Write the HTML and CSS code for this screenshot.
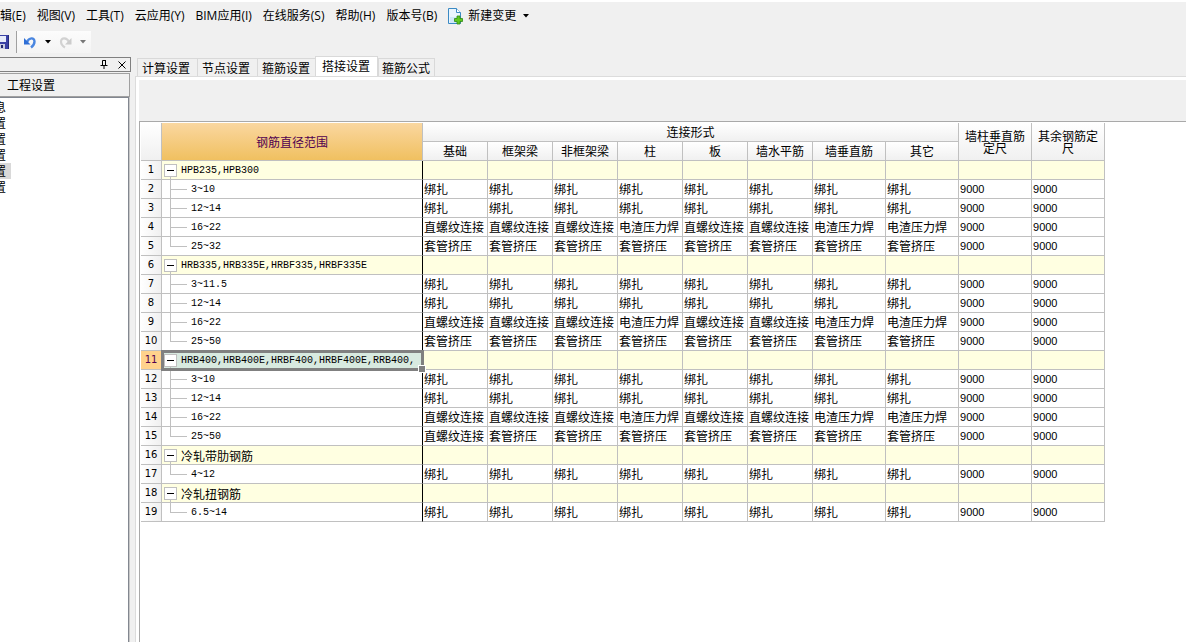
FILE: index.html
```html
<!DOCTYPE html>
<html lang="zh-CN">
<head>
<meta charset="utf-8">
<title>工程设置</title>
<link rel="stylesheet" href="styles.css">
</head>
<body>
<div class="app">
  <nav class="menubar">
    <button class="menu">辑(E)</button>
    <button class="menu">视图(V)</button>
    <button class="menu">工具(T)</button>
    <button class="menu">云应用(Y)</button>
    <button class="menu">BIM应用(I)</button>
    <button class="menu">在线服务(S)</button>
    <button class="menu">帮助(H)</button>
    <button class="menu">版本号(B)</button>
    <button class="menu change">
      <svg width="15" height="17" viewBox="0 0 15 17"><path d="M.5 .5h8l4 4v11h-12z" fill="#eaf5fd" stroke="#3b8ac4"/><path d="M8.500 .5v4h4" fill="#fff" stroke="#3b8ac4"/><path d="M2 9h7v6h-7z" fill="#cfe8f8"/><path d="M9 8h3v2.500h2.500v3H12V16H9v-2.500H6.500v-3H9z" fill="#5fc81e" stroke="#2c8a12" stroke-width=".8"/></svg>
      <span>新建变更</span>
      <svg class="caret" width="6" height="4" viewBox="0 0 6 4"><path d="M0 0h6L3 3.500z" fill="#000"/></svg>
    </button>
  </nav>
  <div class="toolbar">
    <button class="tool save" aria-label="保存"><svg width="9" height="14" viewBox="0 0 9 14"><path d="M0 0h9v14H0z" fill="#3a41a5"/><path d="M0 1h6v6H0z" fill="#e6ebfa"/><path d="M0 9h5v5H0z" fill="#c9cde0"/><path d="M1 10h2v3H1z" fill="#22286e"/><path d="M8 0h1v14H8z" fill="#252a7c"/></svg></button>
    <div class="history">
      <button class="tool" aria-label="撤销"><svg width="13" height="13" viewBox="0 0 13 13"><path d="M3 6C5 1.500 10.500 1 10.500 5.500c0 3-1.500 4.500-3.500 6" fill="none" stroke="#4a86e0" stroke-width="2.400"/><path d="M0 2v6.500h6.500z" fill="#2f6fd6"/></svg></button>
      <button class="tool" aria-label="撤销列表"><svg width="6" height="4" viewBox="0 0 6 4"><path d="M0 0h6L3 3.500z" fill="#000"/></svg></button>
      <button class="tool" aria-label="重做"><svg width="13" height="13" viewBox="0 0 13 13"><path d="M10 6C8 1.500 2 1 2 5.500c0 3 1.500 4.500 4 6" fill="none" stroke="#d2d2d2" stroke-width="2.200"/><path d="M12.500 2v6.500H6z" fill="#ccc"/></svg></button>
      <button class="tool" aria-label="重做列表"><svg width="6" height="4" viewBox="0 0 6 4"><path d="M0 0h6L3 3.500z" fill="#777"/></svg></button>
    </div>
  </div>
  <div class="main">
    <aside class="side">
      <div class="dock">
        <button class="tool" aria-label="固定"><svg width="8" height="9" viewBox="0 0 8 9"><path d="M2.500 5V.5h3V5M.5 5.500h7M4 5.500V9" fill="none" stroke="#000"/><path d="M5 0h1v5H5z"/></svg></button>
        <button class="tool" aria-label="关闭"><svg width="8" height="8" viewBox="0 0 8 8"><path d="M.5 .5l7 7M7.500 .5l-7 7" stroke="#000" fill="none"/></svg></button>
      </div>
      <button class="group">工程设置</button>
      <ul class="list">
        <li><span>息</span></li>
        <li><span>置</span></li>
        <li><span>置</span></li>
        <li><span>置</span></li>
        <li class="on"><span>置</span></li>
        <li><span>置</span></li>
      </ul>
    </aside>
    <section class="content">
      <div class="tabs" role="tablist">
        <button class="tab" role="tab">计算设置</button>
        <button class="tab" role="tab">节点设置</button>
        <button class="tab" role="tab">箍筋设置</button>
        <button class="tab active" role="tab" aria-selected="true">搭接设置</button>
        <button class="tab" role="tab">箍筋公式</button>
      </div>
      <div class="pane">
        <div class="strip"></div>
        <div class="sheet">
          <table class="grid">
            <colgroup><col class="c-num"><col class="c-range"><col class="c-type" span="6"><col class="c-wide" span="4"></colgroup>
            <thead>
              <tr><th rowspan="2"></th><th rowspan="2" class="range">钢筋直径范围</th><th colspan="8">连接形式</th><th rowspan="2" class="wrap">墙柱垂直筋定尺</th><th rowspan="2" class="wrap">其余钢筋定尺</th></tr>
              <tr><th>基础</th><th>框架梁</th><th>非框架梁</th><th>柱</th><th>板</th><th>墙水平筋</th><th>墙垂直筋</th><th>其它</th></tr>
            </thead>
            <tbody>
              <tr class="head"><th>1</th><td><div class="node"><button class="fold" aria-label="折叠"></button>HPB235,HPB300</div></td><td></td><td></td><td></td><td></td><td></td><td></td><td></td><td></td><td></td><td></td></tr>
              <tr><th>2</th><td><div class="leaf">3~10</div></td><td>绑扎</td><td>绑扎</td><td>绑扎</td><td>绑扎</td><td>绑扎</td><td>绑扎</td><td>绑扎</td><td>绑扎</td><td>9000</td><td>9000</td></tr>
              <tr><th>3</th><td><div class="leaf">12~14</div></td><td>绑扎</td><td>绑扎</td><td>绑扎</td><td>绑扎</td><td>绑扎</td><td>绑扎</td><td>绑扎</td><td>绑扎</td><td>9000</td><td>9000</td></tr>
              <tr><th>4</th><td><div class="leaf">16~22</div></td><td>直螺纹连接</td><td>直螺纹连接</td><td>直螺纹连接</td><td>电渣压力焊</td><td>直螺纹连接</td><td>直螺纹连接</td><td>电渣压力焊</td><td>电渣压力焊</td><td>9000</td><td>9000</td></tr>
              <tr><th>5</th><td><div class="leaf last">25~32</div></td><td>套管挤压</td><td>套管挤压</td><td>套管挤压</td><td>套管挤压</td><td>套管挤压</td><td>套管挤压</td><td>套管挤压</td><td>套管挤压</td><td>9000</td><td>9000</td></tr>
              <tr class="head"><th>6</th><td><div class="node"><button class="fold" aria-label="折叠"></button>HRB335,HRB335E,HRBF335,HRBF335E</div></td><td></td><td></td><td></td><td></td><td></td><td></td><td></td><td></td><td></td><td></td></tr>
              <tr><th>7</th><td><div class="leaf">3~11.5</div></td><td>绑扎</td><td>绑扎</td><td>绑扎</td><td>绑扎</td><td>绑扎</td><td>绑扎</td><td>绑扎</td><td>绑扎</td><td>9000</td><td>9000</td></tr>
              <tr><th>8</th><td><div class="leaf">12~14</div></td><td>绑扎</td><td>绑扎</td><td>绑扎</td><td>绑扎</td><td>绑扎</td><td>绑扎</td><td>绑扎</td><td>绑扎</td><td>9000</td><td>9000</td></tr>
              <tr><th>9</th><td><div class="leaf">16~22</div></td><td>直螺纹连接</td><td>直螺纹连接</td><td>直螺纹连接</td><td>电渣压力焊</td><td>直螺纹连接</td><td>直螺纹连接</td><td>电渣压力焊</td><td>电渣压力焊</td><td>9000</td><td>9000</td></tr>
              <tr><th>10</th><td><div class="leaf last">25~50</div></td><td>套管挤压</td><td>套管挤压</td><td>套管挤压</td><td>套管挤压</td><td>套管挤压</td><td>套管挤压</td><td>套管挤压</td><td>套管挤压</td><td>9000</td><td>9000</td></tr>
              <tr class="head current"><th>11</th><td class="selected"><div class="node"><button class="fold" aria-label="折叠"></button>HRB400,HRB400E,HRBF400,HRBF400E,RRB400,</div></td><td></td><td></td><td></td><td></td><td></td><td></td><td></td><td></td><td></td><td></td></tr>
              <tr><th>12</th><td><div class="leaf">3~10</div></td><td>绑扎</td><td>绑扎</td><td>绑扎</td><td>绑扎</td><td>绑扎</td><td>绑扎</td><td>绑扎</td><td>绑扎</td><td>9000</td><td>9000</td></tr>
              <tr><th>13</th><td><div class="leaf">12~14</div></td><td>绑扎</td><td>绑扎</td><td>绑扎</td><td>绑扎</td><td>绑扎</td><td>绑扎</td><td>绑扎</td><td>绑扎</td><td>9000</td><td>9000</td></tr>
              <tr><th>14</th><td><div class="leaf">16~22</div></td><td>直螺纹连接</td><td>直螺纹连接</td><td>直螺纹连接</td><td>电渣压力焊</td><td>直螺纹连接</td><td>直螺纹连接</td><td>电渣压力焊</td><td>电渣压力焊</td><td>9000</td><td>9000</td></tr>
              <tr><th>15</th><td><div class="leaf last">25~50</div></td><td>直螺纹连接</td><td>套管挤压</td><td>套管挤压</td><td>套管挤压</td><td>套管挤压</td><td>套管挤压</td><td>套管挤压</td><td>套管挤压</td><td>9000</td><td>9000</td></tr>
              <tr class="head"><th>16</th><td><div class="node named"><button class="fold" aria-label="折叠"></button>冷轧带肋钢筋</div></td><td></td><td></td><td></td><td></td><td></td><td></td><td></td><td></td><td></td><td></td></tr>
              <tr><th>17</th><td><div class="leaf last">4~12</div></td><td>绑扎</td><td>绑扎</td><td>绑扎</td><td>绑扎</td><td>绑扎</td><td>绑扎</td><td>绑扎</td><td>绑扎</td><td>9000</td><td>9000</td></tr>
              <tr class="head"><th>18</th><td><div class="node named"><button class="fold" aria-label="折叠"></button>冷轧扭钢筋</div></td><td></td><td></td><td></td><td></td><td></td><td></td><td></td><td></td><td></td><td></td></tr>
              <tr><th>19</th><td><div class="leaf last">6.5~14</div></td><td>绑扎</td><td>绑扎</td><td>绑扎</td><td>绑扎</td><td>绑扎</td><td>绑扎</td><td>绑扎</td><td>绑扎</td><td>9000</td><td>9000</td></tr>
            </tbody>
          </table>
        </div>
      </div>
    </section>
  </div>
</div>
</body>
</html>
```
FILE: styles.css
```css
* { box-sizing: border-box; }
body {
  margin: 0;
  background: #f0f0f0;
  color: #000;
  font: 12px/18px "Noto Sans CJK SC", sans-serif;
}
button {
  margin: 0;
  padding: 0;
  border: 0;
  background: none;
  color: inherit;
  font: inherit;
  white-space: nowrap;
}
svg { display: block; }
.app {
  display: flex;
  flex-direction: column;
  min-height: 100vh;
  border-top: 2px solid #fff;
  overflow: hidden;
}
.menubar {
  display: flex;
  align-items: center;
  gap: 11px;
  height: 28px;
  font-family: "Open Sans", "Noto Sans CJK SC", sans-serif;
}
.change { display: flex; align-items: center; gap: 5px; }
.caret { margin-left: 2px; }
.toolbar { display: flex; align-items: center; height: 24px; }
.save { width: 16px; }
.history {
  display: flex;
  align-items: center;
  gap: 8px;
  height: 22px;
  padding: 0 5px 0 7px;
  border-left: 1px solid #a0a0a0;
  background: linear-gradient(#fcfcfc, #f4f4f4);
}
.main { display: flex; flex: 1; padding-top: 2px; }

.side {
  display: flex;
  flex-direction: column;
  width: 131px;
  flex: none;
  padding-top: 1px;
}
.dock {
  display: flex;
  align-items: center;
  justify-content: flex-end;
  gap: 10px;
  height: 15px;
  padding-right: 4px;
  border: 1px solid #808080;
  border-left: 0;
}
.group {
  height: 24px;
  margin: 1px 1px 0 0;
  padding-left: 7px;
  border: 1px solid #a0a0a0;
  border-left: 0;
  text-align: left;
}
.list {
  flex: 1;
  margin: 0 2px 0 0;
  padding: 1px 0;
  border: 1px solid #828790;
  border-width: 1px 1px 0 0;
  box-shadow: 1px 0 #c8c8c8;
  background: #fff;
  list-style: none;
  line-height: 16px;
}
.list li { width: 11px; overflow: hidden; }
.list span { display: block; margin-left: -6px; }
.list .on { background: #d9d9d9; }

.content { display: flex; flex: 1; flex-direction: column; min-width: 0; margin-left: 4px; }
.tabs { display: flex; align-items: flex-end; height: 20px; padding-left: 2px; }
.tab {
  height: 18px;
  padding: 0 7px 0 4px;
  border: 1px solid #d9d9d9;
  border-width: 1px 0 0 1px;
}
.tab:last-child { padding: 0 4px 0 3px; border-right-width: 1px; }
.tab.active {
  height: 20px;
  margin-left: -2px;
  padding: 0 7px 4px 6px;
  border-right-width: 1px;
  background: #fff;
}
.pane {
  display: flex;
  flex: 1;
  flex-direction: column;
  padding: 3px 0 0 3px;
  border: 1px solid #dcdcdc;
  border-width: 1px 0 0 1px;
  background: #fff;
}
.strip { height: 41px; background: #f0f0f0; }
.sheet { flex: 1; padding: 1px 0 0 1px; border: 1px solid #a9a9a9; border-width: 1px 0 0 1px; }

.grid { width: 964px; border-collapse: separate; border-spacing: 0; table-layout: fixed; }
.c-num { width: 21px; }
.c-range { width: 261px; }
.c-type { width: 65px; }
.c-wide { width: 73px; }
.grid th, .grid td {
  height: 19px;
  padding: 0;
  border: 1px solid #c0c0c0;
  border-width: 0 1px 1px 0;
  font-weight: 400;
  white-space: nowrap;
}
.grid td { padding-left: 1px; }
.grid thead th { background: linear-gradient(#fff, #f0f0f0); }
.grid thead .range { background: linear-gradient(#fad7a0, #f0c060); color: #500050; }
.grid thead .wrap { padding: 0 5px; line-height: 12px; white-space: normal; }
.grid tbody th {
  background: linear-gradient(90deg, #fff, #f0f0f0);
  font-family: "DejaVu Sans", sans-serif;
  font-size: 10px;
}
.grid td:nth-child(2) { padding: 0; border-right-color: #000; }
.grid td:nth-last-child(-n+2) { font-family: "Liberation Sans", sans-serif; font-size: 11px; }
.grid .head td { background: #ffffe1; }
.grid .current th { background: #ffd28c; color: #500050; }
.grid .selected { position: relative; }
.grid .head .selected { background: #d8eae0; }
.selected::before {
  content: "";
  position: absolute;
  inset: -1px -2px -2px -1px;
  border: 3px solid #808080;
}
.selected::after {
  content: "";
  position: absolute;
  right: -4px;
  bottom: -4px;
  width: 6px;
  height: 6px;
  border: 1px solid #fff;
  background: #808080;
}
.node, .leaf {
  display: flex;
  align-items: center;
  height: 18px;
  font-family: "Liberation Mono", monospace;
  font-size: 10px;
}
.node {
  gap: 4px;
  padding: 1px 0 0 2px;
  background: linear-gradient(#c0c0c0, #c0c0c0) 8px 16px / 1px 2px no-repeat;
}
.node.named { font-family: "Noto Sans CJK SC", sans-serif; font-size: 12px; }
.fold {
  width: 13px;
  height: 13px;
  border: 1px solid #c0c0c0;
  background: linear-gradient(#000, #000) center / 7px 1px no-repeat #fff;
}
.leaf {
  padding: 2px 0 0 29px;
  background:
    linear-gradient(#c0c0c0, #c0c0c0) 8px 9px / 17px 1px no-repeat,
    linear-gradient(#c0c0c0, #c0c0c0) 8px 0 / 1px 18px no-repeat;
}
.leaf.last {
  background:
    linear-gradient(#c0c0c0, #c0c0c0) 8px 9px / 17px 1px no-repeat,
    linear-gradient(#c0c0c0, #c0c0c0) 8px 0 / 1px 9px no-repeat;
}
```
